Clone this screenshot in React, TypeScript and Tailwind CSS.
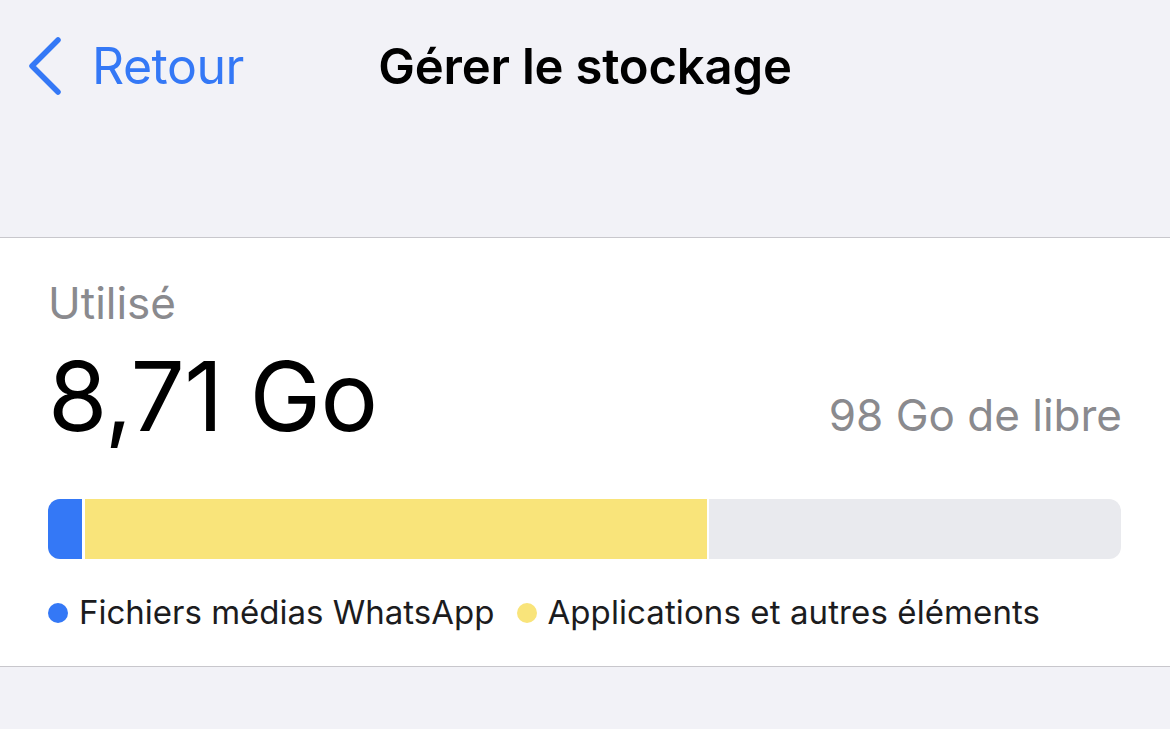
export default function App() {
  return (
    <div className="min-h-[729px] bg-[#f2f2f7] font-['Inter','Noto_Sans',sans-serif]">
      <header className="h-[238px] border-b border-[#c8c7cc]">
        <div className="grid h-[132px] grid-cols-[1fr_auto_1fr] items-center">
          <button className="flex items-center gap-[30px] pl-[28px] text-[#3478f6]">
            <svg width="34" height="58" viewBox="0 0 34 58" fill="none">
              <path d="M30 3 L4 29 L30 55" stroke="currentColor" strokeWidth="5.5" strokeLinecap="round" strokeLinejoin="round" />
            </svg>
            <span className="text-[50px] leading-none tracking-[-0.5px]">Retour</span>
          </button>
          <h1 className="text-[49px] font-semibold leading-none tracking-[-0.2px] text-black">Gérer le stockage</h1>
          <div />
        </div>
      </header>

      <section className="h-[429px] border-b border-[#c8c7cc] bg-white px-[48px] pt-[37px]">
        <p className="text-[44px] leading-[56px] text-[#8a8a8e]">Utilisé</p>
        <div className="mt-[10px] flex items-baseline justify-between">
          <span className="text-[96px] leading-[110px] font-normal tracking-[-0.5px] text-black">8,71 Go</span>
          <span className="text-[44px] text-[#8a8a8e]">98 Go de libre</span>
        </div>
        <div className="mt-[48px] flex h-[60px] w-[1073px] overflow-hidden rounded-[12px] bg-[#e9eaee]">
          <div className="w-[34px] bg-[#3478f6]" />
          <div className="w-[3px] bg-white" />
          <div className="w-[622px] bg-[#f9e47a]" />
          <div className="w-[2px] bg-white" />
        </div>
        <div className="mt-[37px] flex items-center text-[33px] leading-none text-[#1c1c1e]">
          <span className="h-[20px] w-[20px] rounded-full bg-[#3478f6]" />
          <span className="ml-[11px]">Fichiers médias WhatsApp</span>
          <span className="ml-[23px] h-[20px] w-[20px] rounded-full bg-[#f9e47a]" />
          <span className="ml-[10px] tracking-[0.1px]">Applications et autres éléments</span>
        </div>
      </section>
    </div>
  );
}
